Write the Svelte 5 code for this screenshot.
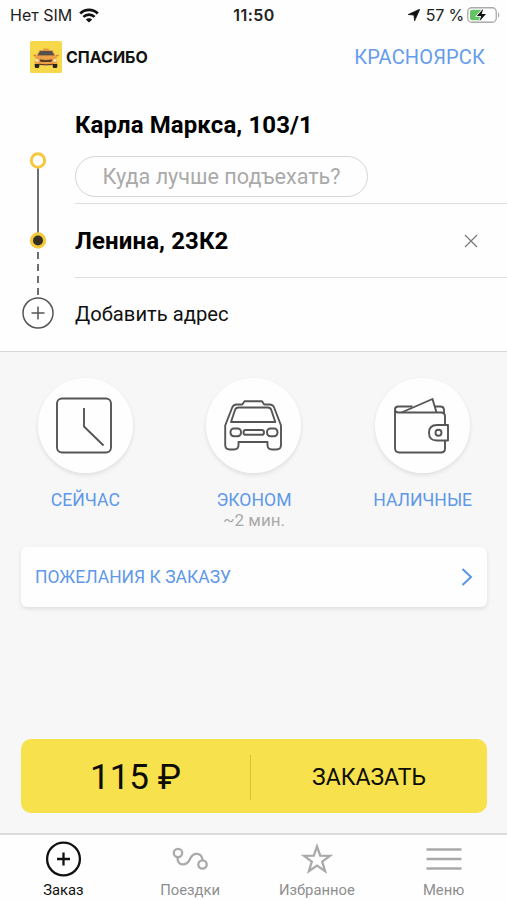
<script lang="ts">
	const city = 'КРАСНОЯРСК';
	const price = 115;

	const options = [
		{ id: 'time', label: 'СЕЙЧАС', note: '' },
		{ id: 'tariff', label: 'ЭКОНОМ', note: '~2 мин.' },
		{ id: 'payment', label: 'НАЛИЧНЫЕ', note: '' },
	];

	const tabs = [
		{ id: 'order', label: 'Заказ' },
		{ id: 'trips', label: 'Поездки' },
		{ id: 'favorites', label: 'Избранное' },
		{ id: 'menu', label: 'Меню' },
	];

	let activeTab = $state('order');
	let destination = $state('Ленина, 23К2');
</script>

<div class="screen">
	<div class="status-bar">
		<div class="status-left">
			<span class="carrier">Нет SIM</span>
			<svg class="wifi" viewBox="0 0 20 15" aria-hidden="true">
				<g fill="none" stroke="#111" stroke-width="2.7">
					<path d="M1.2 5.5C6.2.7 13.8.7 18.8 5.5" />
					<path d="M4.4 8.9c3.2-3.1 8-3.1 11.2 0" />
				</g>
				<path d="M10 14.6 6.8 11.4c1.8-1.7 4.6-1.7 6.4 0z" fill="#111" />
			</svg>
		</div>
		<span class="clock">11:50</span>
		<div class="status-right">
			<svg class="location" viewBox="0 0 12 12" aria-hidden="true">
				<path d="M11.8.2 6.6 11.8 6 6.1.2 5.5z" fill="#111" stroke="#111" stroke-width=".8" stroke-linejoin="round" />
			</svg>
			<span class="percent">57 %</span>
			<svg class="battery" viewBox="0 0 33 16" aria-hidden="true">
				<rect x=".75" y=".75" width="28.5" height="14.5" rx="4" fill="#fff" stroke="#aaa" stroke-width="1.3" />
				<path d="M5 2.7h10v10.6H5a2 2 0 0 1-2-2V4.7a2 2 0 0 1 2-2z" fill="#65c466" />
				<path d="M31 5.3c1.7.6 1.7 4.8 0 5.4z" fill="#aaa" />
				<path d="M16.3 1.8 9.8 8.900h4.300L12.500 14.200l6.500-7.100h-4.300z" fill="#111" stroke="#fff" stroke-width="1.600" paint-order="stroke" />
			</svg>
		</div>
	</div>

	<header class="header">
		<div class="brand">
			<svg class="brand-logo" viewBox="0 0 32 32" aria-hidden="true">
				<rect width="32" height="32" rx="1.5" fill="#f7d84b" />
				<path d="M13.500 7.500h5l.7 2h-6.400z" fill="#e39a43" />
				<path d="M9.600 9.200h12.800l3.300 5.800H6.300z" fill="#df8b3e" />
				<path d="M10.200 10h11.600l2.700 4.700h-17z" fill="#55504b" />
				<path d="M5.300 16.500q.5-2 2.700-2h16q2.200 0 2.700 2l.7 5.500q-.2 2.500-2.400 2.500H7q-2.200 0-2.400-2.500z" fill="#eda048" />
				<path d="M3 13.700h3v1.800H4zM29 13.700h-3v1.800h2z" fill="#d98436" />
				<path d="M4.700 23h4.600v2.500q0 1.500-1.500 1.500H6.200q-1.500 0-1.500-1.500zM22.700 23h4.600v2.500q0 1.500-1.500 1.500h-1.600q-1.500 0-1.500-1.500z" fill="#28241f" />
				<path d="M9.500 18.200q6.500 1.500 13 0l-1.200 2.700H10.700z" fill="#5a3e25" />
				<path d="M9 23.200q7 1.300 14 0" fill="none" stroke="#4b3828" />
				<path d="m5.500 17.700 3.200 1-.7 2-2.500-.5zM26.500 17.700l-3.200 1 .7 2 2.500-.5z" fill="#fff3d4" />
			</svg>
			<span class="brand-name">СПАСИБО</span>
		</div>
		<button class="city">{city}</button>
	</header>

	<section class="route">
		<svg class="rail" viewBox="0 0 75 265" aria-hidden="true">
			<path d="M38 81v68" stroke="#6f6f6f" stroke-width="2" />
			<path d="M38 166v44" stroke="#6f6f6f" stroke-width="2" stroke-dasharray="7 5" />
			<circle cx="38" cy="74.5" r="6.7" fill="#fff" stroke="#f6c840" stroke-width="3" />
			<circle cx="38" cy="154.5" r="6.6" fill="#33301f" stroke="#f6c840" stroke-width="3.2" />
			<g fill="none" stroke="#555" stroke-width="1.5">
				<circle cx="38" cy="227" r="15" />
				<path d="M31.5 227h13M38 220.5v13" />
			</g>
		</svg>
		<div class="addresses">
			<div class="address pickup">
				<span class="address-name">Карла Маркса, 103/1</span>
				<button class="hint">Куда лучше подъехать?</button>
			</div>
			<div class="address">
				<span class="address-name">{destination}</span>
				<button class="clear" aria-label="Удалить адрес" onclick={() => (destination = '')}>
					<svg viewBox="0 0 14 14" aria-hidden="true">
						<path d="m1 1 12 12M13 1 1 13" stroke="#777" stroke-width="1.2" />
					</svg>
				</button>
			</div>
			<button class="address add">Добавить адрес</button>
		</div>
	</section>

	<main class="content">
		<div class="options">
			{#each options as option (option.id)}
				<button class="option">
					<span class="option-circle">
						<svg viewBox="0 0 64 64" fill="none" stroke="#555" stroke-width="1.9" stroke-linejoin="round" aria-hidden="true">
							{#if option.id === 'time'}
								<rect x="4" y="4.5" width="54" height="54" rx="5" />
								<path d="M31 14v18.500l19.500 19" />
							{:else if option.id === 'tariff'}
								<path d="M20.300 10.500 22.500 7.200H40l2.200 3.300h5.300q3.500 0 4.800 3.500l6.700 17.500V51q0 4.500-4.500 4.500H50q-4.500 0-4.500-4.500v-3h-29v3q0 4.500-4.500 4.500H7.700q-4.500 0-4.500-4.500V31.500L10 14q1.300-3.500 4.800-3.500z" />
								<path d="M16.500 13.500h29.300q2.700 0 3.500 2.500l4 12H9l4-12q.8-2.500 3.500-2.500z" />
								<rect x="8.5" y="34.5" width="10.5" height="7.7" rx="3.4" />
								<rect x="21.5" y="36" width="20.5" height="4.8" rx="2.4" />
								<rect x="45" y="34.5" width="10.5" height="7.7" rx="3.4" />
							{:else}
								<path d="M54 31V22.500q0-4-4-4H7.500q-3.500 0-3.500-3t3.500-3h14M4 15.500V54q0 4.500 4.500 4.500h41.500q4 0 4-4v-8" />
								<path d="M10.500 18.500 41.500 5l4 13.500M44.500 12.500h4.500q4 0 4 3.500v4" />
								<path d="M57 31H46q-8 0-8 7.800t8 7.700h11z" />
								<circle cx="47.500" cy="38.700" r="3" />
							{/if}
						</svg>
					</span>
					<span class="option-label">{option.label}</span>
					{#if option.note}
						<span class="option-note">{option.note}</span>
					{/if}
				</button>
			{/each}
		</div>

		<button class="wishes">
			<span>ПОЖЕЛАНИЯ К ЗАКАЗУ</span>
			<svg class="chevron" viewBox="0 0 12 18" aria-hidden="true">
				<path d="m1.5 1 8.5 8-8.500 8" fill="none" stroke="#5796e5" stroke-width="2" />
			</svg>
		</button>

		<button class="submit">
			<span class="price">{price} ₽</span>
			<span class="submit-label">ЗАКАЗАТЬ</span>
		</button>
	</main>

	<nav class="tab-bar">
		{#each tabs as tab (tab.id)}
			<button class="tab" class:tab--active={tab.id === activeTab} onclick={() => (activeTab = tab.id)}>
				<svg viewBox="0 0 40 40" fill="none" stroke="currentColor" stroke-width="2.3" aria-hidden="true">
					{#if tab.id === 'order'}
						<circle cx="20.500" cy="20" r="16.400" />
						<path d="M14 20h13M20.500 13.500v13" />
					{:else if tab.id === 'trips'}
						<circle cx="8" cy="14" r="4.2" />
						<circle cx="32.5" cy="25.500" r="4.200" />
						<path d="M7.500 18.500c0 9.500 9.500 8.500 12.500 1.500 3.500-7.500 12-6.500 12.500 1.300" />
					{:else if tab.id === 'favorites'}
						<path d="m20 7.500 3.200 9.100 9.800.2-7.800 5.900 2.900 9.500-8.100-5.600-8.100 5.600 2.900-9.500L7 16.800l9.800-.2z" />
					{:else}
						<path d="M2.500 10.500h35M2.500 20h35M2.500 29.500h35" />
					{/if}
				</svg>
				<span>{tab.label}</span>
			</button>
		{/each}
	</nav>
</div>

<style>
	:global(body) {
		background: #fff;
	}

	.screen {
		display: flex;
		flex-direction: column;
		width: 507px;
		height: 900px;
		overflow: hidden;
		background: #fefefe;
		font-family: Roboto, sans-serif;
		color: #111;
	}

	button {
		margin: 0;
		padding: 0;
		border: none;
		background: none;
		font: inherit;
		color: inherit;
		cursor: pointer;
	}

	svg {
		display: block;
		flex-shrink: 0;
	}

	.status-bar {
		display: grid;
		grid-template-columns: 1fr auto 1fr;
		align-items: center;
		height: 30px;
		padding: 0 7px 0 10px;
		box-sizing: border-box;
		font-family: Inter, sans-serif;
		font-size: 16px;
		color: #222;
	}

	.status-left,
	.status-right {
		display: flex;
		align-items: center;
	}

	.status-left {
		gap: 7px;
	}

	.status-right {
		justify-content: flex-end;
	}

	.wifi {
		width: 20px;
		height: 15px;
	}

	.clock {
		margin-right: 2px;
		font-weight: 600;
		letter-spacing: 0.5px;
	}

	.location {
		width: 12px;
		height: 12px;
		margin-right: 6px;
	}

	.percent {
		margin-right: 3px;
		letter-spacing: -0.2px;
	}

	.battery {
		width: 33px;
		height: 16px;
	}

	.header {
		display: flex;
		align-items: center;
		justify-content: space-between;
		height: 56px;
		padding: 0 22px 2px 30px;
		box-sizing: border-box;
	}

	.brand {
		display: flex;
		align-items: center;
		gap: 4px;
	}

	.brand-logo {
		width: 32px;
		height: 32px;
	}

	.brand-name {
		font-family: Inter, sans-serif;
		font-size: 16px;
		font-weight: 700;
	}

	.city {
		font-size: 20px;
		color: #659ced;
		letter-spacing: 0.15px;
	}

	.route {
		display: grid;
		grid-template-columns: 75px 1fr;
		height: 266px;
		box-sizing: border-box;
		border-bottom: 1px solid #d9d9d9;
	}

	.rail {
		width: 75px;
		height: 265px;
	}

	.addresses {
		display: grid;
		grid-template-rows: 118px 74px 73px;
	}

	.address {
		display: flex;
		align-items: center;
		justify-content: space-between;
		box-sizing: border-box;
		border-bottom: 1px solid #dedede;
	}

	.pickup {
		flex-direction: column;
		align-items: flex-start;
		justify-content: flex-start;
		padding-top: 24px;
	}

	.address-name {
		font-size: 24px;
		font-weight: 700;
		line-height: 30px;
		letter-spacing: 0.1px;
		color: #000;
	}

	.hint {
		width: 293px;
		height: 41px;
		margin-top: 16px;
		border: 1.5px solid #d4d4d4;
		border-radius: 21px;
		font-size: 21.6px;
		color: #aaa;
	}

	.clear {
		padding: 8px;
		margin-right: 21px;
	}

	.clear svg {
		width: 14px;
		height: 14px;
	}

	.add {
		padding-bottom: 2px;
		border: none;
		font-size: 20.2px;
	}

	.content {
		display: flex;
		flex: 1;
		flex-direction: column;
		padding-bottom: 20px;
		background: #f7f7f7;
	}

	.options {
		display: grid;
		grid-template-columns: repeat(3, 1fr);
		height: 195px;
		padding: 26px 0 0 1px;
		box-sizing: border-box;
	}

	.option {
		display: flex;
		flex-direction: column;
		align-items: center;
	}

	.option-circle {
		display: grid;
		place-items: center;
		width: 95px;
		height: 95px;
		border-radius: 50%;
		background: #fefefe;
		box-shadow: 0 2px 4px rgba(0, 0, 0, 0.1);
	}

	.option-circle svg {
		width: 64px;
		height: 64px;
	}

	.option-label {
		margin-top: 16px;
		font-size: 17.6px;
		line-height: 22px;
		color: #5e98e9;
	}

	.option-note {
		font-size: 17px;
		line-height: 19px;
		color: #aaa;
	}

	.wishes {
		display: flex;
		align-items: center;
		justify-content: space-between;
		height: 60px;
		margin: 0 20px 0 21px;
		padding: 0 14px;
		border-radius: 6px;
		background: #fefefe;
		box-shadow: 0 2px 4px rgba(0, 0, 0, 0.1);
		font-size: 17.5px;
		color: #5e98e9;
	}

	.chevron {
		width: 12px;
		height: 18px;
	}

	.submit {
		display: grid;
		grid-template-columns: 230px 1fr;
		align-items: center;
		height: 74px;
		margin: auto 20px 0 21px;
		padding-top: 2px;
		border-radius: 10px;
		background: #f7e14c;
		color: #0d0d05;
	}

	.price {
		border-right: 1px solid #d5c037;
		font-size: 35px;
		line-height: 45px;
	}

	.submit-label {
		font-size: 23px;
	}

	.tab-bar {
		display: grid;
		grid-template-columns: repeat(4, 1fr);
		height: 67px;
		box-sizing: border-box;
		border-top: 2px solid #dcdcdc;
		background: #fefefe;
	}

	.tab {
		display: flex;
		flex-direction: column;
		align-items: center;
		padding-top: 4px;
		font-size: 14.8px;
		line-height: 22px;
		color: #aaa;
	}

	.tab svg {
		width: 40px;
		height: 40px;
	}

	.tab span {
		color: #8e8e8e;
	}

	.tab--active,
	.tab--active span {
		color: #111;
	}
</style>
